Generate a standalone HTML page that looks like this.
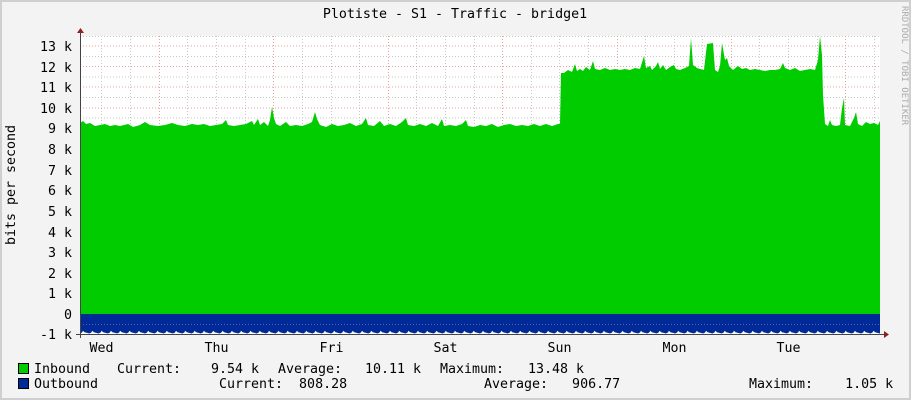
<!DOCTYPE html>
<html><head><meta charset="utf-8"><style>
html,body{margin:0;padding:0;background:#f3f3f3}
svg{display:block}
text{font-family:"DejaVu Sans Mono","Liberation Mono",monospace;fill:#000;white-space:pre}
</style></head><body>
<svg width="911" height="400" viewBox="0 0 911 400" xmlns="http://www.w3.org/2000/svg" xml:space="preserve">
<defs>
<pattern id="saw" x="80" y="326" width="9.3" height="8" patternUnits="userSpaceOnUse">
<path d="M0,8 L0,7.5 L2,6.5 L3,4.8 L4.5,6.2 L6.5,6.8 L9.3,7.5 L9.3,8 Z" fill="#fff"/>
</pattern>
</defs>
<rect x="0" y="0" width="911" height="400" fill="#f3f3f3"/>
<rect x="1" y="1" width="909" height="398" fill="none" stroke="#cfcfcf" stroke-width="2"/>
<text x="455" y="18" text-anchor="middle" font-size="13.3">Plotiste - S1 - Traffic - bridge1</text>
<text transform="translate(902,6) rotate(90)" font-size="9" style="fill:#aaa">RRDTOOL / TOBI OETIKER</text>
<text transform="translate(15,185) rotate(-90)" text-anchor="middle" font-size="13.3">bits per second</text>
<rect x="80" y="36" width="800" height="298" fill="#fff"/>
<g stroke="#c8c8c8" stroke-width="1" stroke-dasharray="1,2">
<path d="M80,324.5H880M80,304H880M80,283H880M80,262.5H880M80,242H880M80,221.5H880M80,201H880M80,180H880M80,159.5H880M80,139H880M80,118H880M80,97.5H880M80,77H880M80,56.5H880M80,36.5H880"/>
<path d="M101.5,36V334M130.5,36V334M187.5,36V334M216.5,36V334M245.5,36V334M302.5,36V334M331.5,36V334M359.5,36V334M416.5,36V334M445.5,36V334M474.5,36V334M531.5,36V334M559.5,36V334M588.5,36V334M645.5,36V334M674.5,36V334M702.5,36V334M759.5,36V334M788.5,36V334M817.5,36V334M874.5,36V334"/>
</g>
<g stroke="#e8a0a0" stroke-width="1" stroke-dasharray="1,2">
<path d="M80,314.5H880M80,293.5H880M80,273H880M80,252.5H880M80,232H880M80,211H880M80,190.5H880M80,170H880M80,149H880M80,128.5H880M80,108H880M80,87H880M80,66.5H880M80,46H880"/>
<path d="M159.5,36V334M273.5,36V334M388.5,36V334M502.5,36V334M617.5,36V334M731.5,36V334M845.5,36V334"/>
</g>
<path fill="#00cc00" d="M80,314 L80,123 L83,121 L86,124 L90,123 L95,126 L100,125 L105,124 L110,126 L115,125 L120,126 L128,124 L133,127 L140,125 L145,122 L150,125 L158,126 L165,125 L172,123 L178,125 L185,126 L192,124 L198,125 L204,124 L210,126 L216,125 L222,124 L226,120 L228,125 L234,126 L240,125 L246,124 L252,121 L254,125 L258,119 L260,125 L264,122 L268,126 L270,120 L272,107 L274,118 L276,124 L280,126 L286,122 L290,126 L296,125 L302,126 L308,124 L312,122 L315,112 L317,119 L320,125 L326,127 L332,124 L338,126 L344,125 L350,123 L356,126 L362,124 L366,118 L368,125 L374,126 L380,121 L384,126 L390,124 L396,126 L402,122 L406,118 L408,125 L414,126 L420,124 L426,126 L432,123 L438,126 L442,119 L444,126 L450,125 L456,126 L462,124 L466,120 L468,126 L474,127 L480,125 L486,126 L492,124 L498,127 L504,125 L510,124 L516,126 L522,125 L528,126 L534,124 L540,126 L546,124 L552,126 L558,124 L560,124 L561,73 L564,73 L568,70 L572,72 L575,64 L577,71 L580,69 L583,71 L586,67 L590,70 L593,61 L595,69 L600,70 L605,68 L610,70 L615,69 L620,70 L625,69 L630,70 L635,68 L640,69 L644,56 L646,68 L650,66 L652,70 L656,66 L658,62 L660,69 L663,65 L666,70 L670,67 L674,65 L676,69 L680,70 L685,68 L689,66 L691,38 L693,65 L697,68 L700,69 L704,70 L707,44 L713,43 L715,70 L718,72 L720,66 L722,43 L725,60 L727,58 L729,66 L733,70 L738,66 L742,69 L746,68 L750,70 L755,69 L760,70 L765,71 L770,70 L775,70 L780,69 L783,63 L785,68 L790,70 L795,68 L800,71 L805,70 L810,69 L815,70 L818,60 L820,36 L822,55 L823,95 L825,124 L828,126 L830,120 L832,125 L836,126 L840,125 L842,108 L844,98 L845,125 L850,126 L854,118 L856,112 L858,124 L862,126 L866,122 L870,124 L874,123 L878,125 L880,121 L880,314 Z"/>
<rect x="80" y="314" width="800" height="20" fill="#002a97"/>
<g stroke="#4a62b0" stroke-width="1" stroke-dasharray="1,2"><path d="M80,324.5H880"/></g>
<rect x="80" y="326" width="800" height="8" fill="url(#saw)"/>
<path d="M80.5,32V338" stroke="#444" stroke-width="1"/>
<path d="M76,334.5H884" stroke="#444" stroke-width="1"/>
<path d="M77,33 L84,33 L80.5,28 Z" fill="#902020"/>
<path d="M884,331 L884,338 L889,334.5 Z" fill="#902020"/>
<g font-size="13.3" text-anchor="end">
<text x="72" y="51">13 k</text><text x="72" y="72">12 k</text><text x="72" y="92">11 k</text><text x="72" y="113">10 k</text>
<text x="72" y="133">9 k</text><text x="72" y="154">8 k</text><text x="72" y="175">7 k</text><text x="72" y="195">6 k</text>
<text x="72" y="216">5 k</text><text x="72" y="237">4 k</text><text x="72" y="257">3 k</text><text x="72" y="278">2 k</text>
<text x="72" y="298">1 k</text><text x="72" y="319">0</text><text x="72" y="339">-1 k</text>
</g>
<g font-size="13.3" text-anchor="middle">
<text x="101.5" y="352">Wed</text><text x="216.5" y="352">Thu</text><text x="331.5" y="352">Fri</text><text x="445.5" y="352">Sat</text>
<text x="559.5" y="352">Sun</text><text x="674.5" y="352">Mon</text><text x="788.5" y="352">Tue</text>
</g>
<rect x="18.5" y="363.5" width="10" height="10" fill="#00cc00" stroke="#000"/>
<rect x="18.5" y="378.5" width="10" height="10" fill="#002a97" stroke="#000"/>
<g font-size="13.3">
<text x="34" y="373">Inbound</text>
<text x="117" y="373">Current:</text>
<text x="259" y="373" text-anchor="end">9.54 k</text>
<text x="278" y="373">Average:</text>
<text x="421" y="373" text-anchor="end">10.11 k</text>
<text x="440" y="373">Maximum:</text>
<text x="584" y="373" text-anchor="end">13.48 k</text>
<text x="34" y="388">Outbound</text>
<text x="219" y="388">Current:  808.28</text>
<text x="484" y="388">Average:   906.77</text>
<text x="749" y="388">Maximum:    1.05 k</text>
</g>
</svg>
</body></html>
